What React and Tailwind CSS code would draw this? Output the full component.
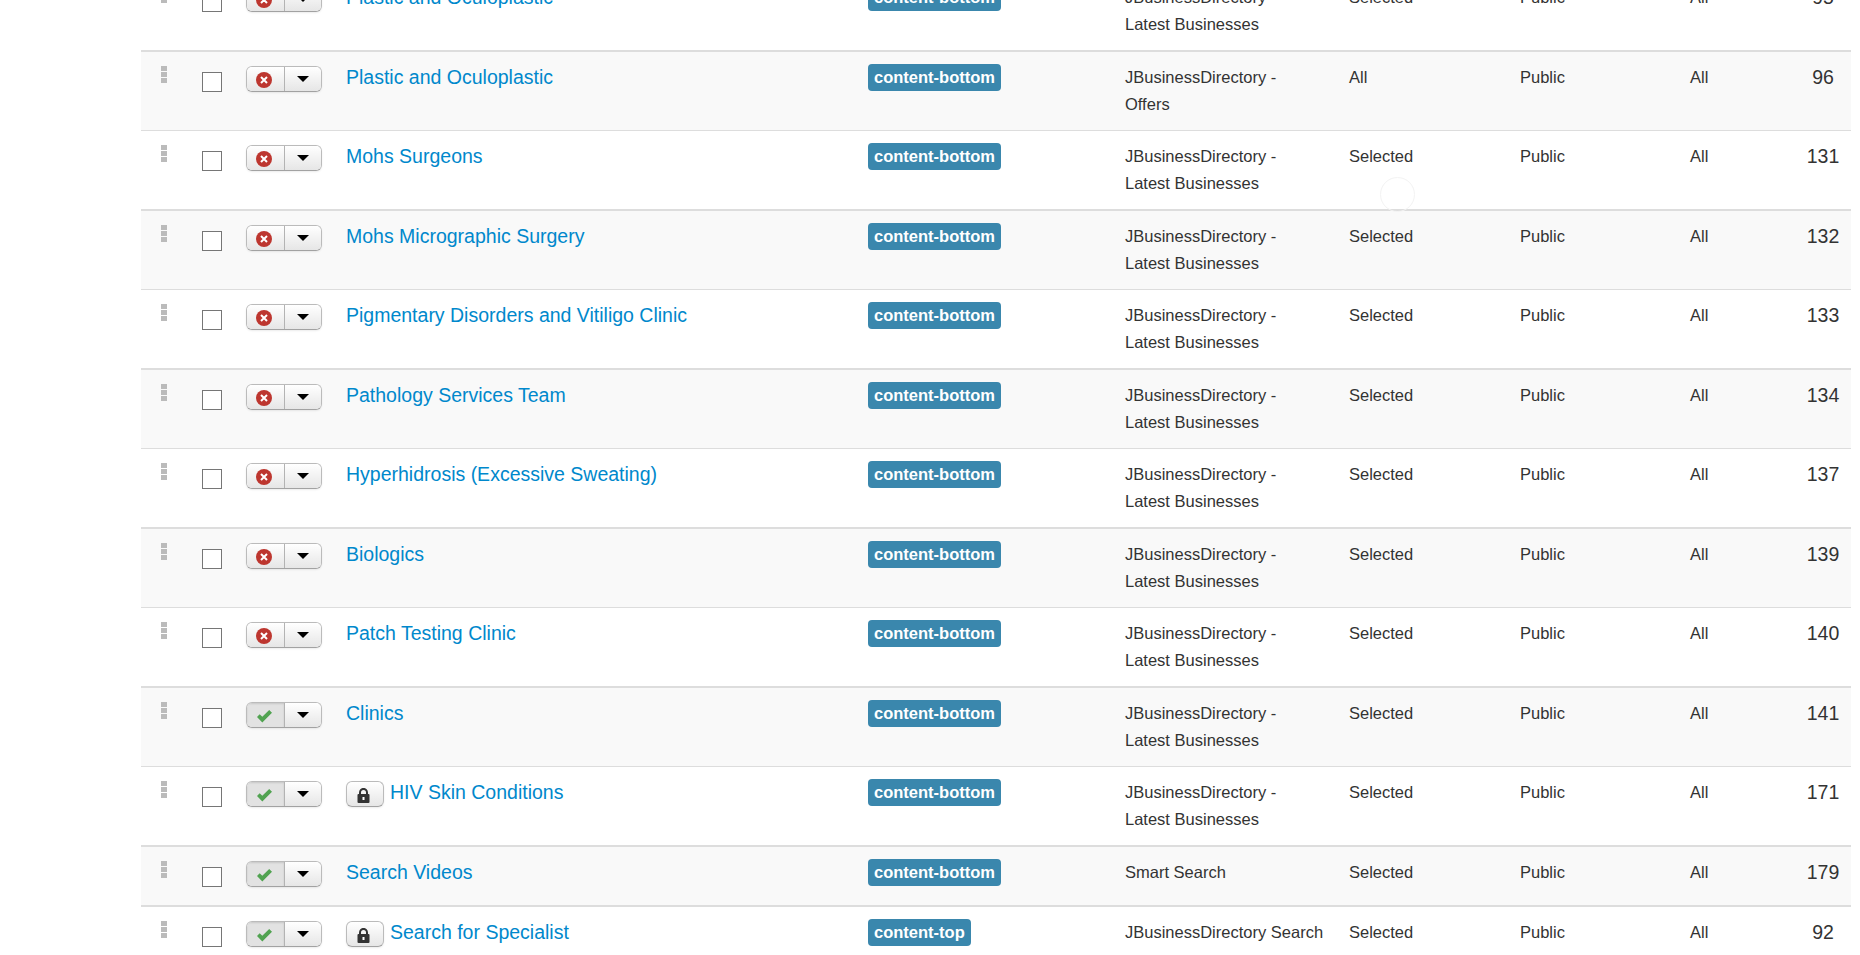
import React from "react";

const rows = [
  { name: "Plastic and Oculoplastic", module: ["JBusinessDirectory -", "Latest Businesses"], pages: "Selected", id: "95", state: "off", h: "h-[79px]", line: "border-t" },
  { name: "Plastic and Oculoplastic", module: ["JBusinessDirectory -", "Offers"], pages: "All", id: "96", state: "off", h: "h-[80px]", line: "border-t-2", gray: true },
  { name: "Mohs Surgeons", module: ["JBusinessDirectory -", "Latest Businesses"], pages: "Selected", id: "131", state: "off", h: "h-[79px]", line: "border-t" },
  { name: "Mohs Micrographic Surgery", module: ["JBusinessDirectory -", "Latest Businesses"], pages: "Selected", id: "132", state: "off", h: "h-[80px]", line: "border-t-2", gray: true },
  { name: "Pigmentary Disorders and Vitiligo Clinic", module: ["JBusinessDirectory -", "Latest Businesses"], pages: "Selected", id: "133", state: "off", h: "h-[79px]", line: "border-t" },
  { name: "Pathology Services Team", module: ["JBusinessDirectory -", "Latest Businesses"], pages: "Selected", id: "134", state: "off", h: "h-[80px]", line: "border-t-2", gray: true },
  { name: "Hyperhidrosis (Excessive Sweating)", module: ["JBusinessDirectory -", "Latest Businesses"], pages: "Selected", id: "137", state: "off", h: "h-[79px]", line: "border-t" },
  { name: "Biologics", module: ["JBusinessDirectory -", "Latest Businesses"], pages: "Selected", id: "139", state: "off", h: "h-[80px]", line: "border-t-2", gray: true },
  { name: "Patch Testing Clinic", module: ["JBusinessDirectory -", "Latest Businesses"], pages: "Selected", id: "140", state: "off", h: "h-[79px]", line: "border-t" },
  { name: "Clinics", module: ["JBusinessDirectory -", "Latest Businesses"], pages: "Selected", id: "141", state: "on", h: "h-[80px]", line: "border-t-2", gray: true },
  { name: "HIV Skin Conditions", module: ["JBusinessDirectory -", "Latest Businesses"], pages: "Selected", id: "171", state: "on", locked: true, h: "h-[79px]", line: "border-t" },
  { name: "Search Videos", module: ["Smart Search"], pages: "Selected", id: "179", state: "on", h: "h-[60px]", line: "border-t-2", gray: true },
  { name: "Search for Specialist", module: ["JBusinessDirectory Search"], pages: "Selected", id: "92", state: "on", locked: true, badge: "content-top", h: "h-[60px]", line: "border-t-2" },
];

function Grip() {
  return (
    <div className="flex flex-col gap-px w-[6px] ml-[20px]">
      <span className="block h-[5px] bg-[#bbbbbb]" />
      <span className="block h-[5px] bg-[#bbbbbb]" />
      <span className="block h-[5px] bg-[#bbbbbb]" />
    </div>
  );
}

function StatusIcon({ state }) {
  if (state === "on") {
    return (
      <svg width="15" height="13" viewBox="0 0 15 13">
        <path d="M0 7l2.7-2.7 2.6 2.5L12.2 0 15 2.8 5.3 12.6z" fill="#51a351" />
      </svg>
    );
  }
  return (
    <svg width="16" height="16" viewBox="0 0 16 16">
      <circle cx="8" cy="8" r="8" fill="#bd362f" />
      <path d="M5 5l6 6M11 5l-6 6" stroke="#fff" strokeWidth="2" />
    </svg>
  );
}

function StatusButtons({ state }) {
  const left = state === "on" ? "bg-[#e2e2e2] shadow-[inset_0_1px_2px_rgba(0,0,0,0.12)]" : "bg-gradient-to-b from-white to-[#e6e6e6]";
  return (
    <div className="flex w-[76px] h-[26px] rounded-[6px] border border-[#bbbbbb] border-b-[#a2a2a2] overflow-hidden shadow-[0_1px_2px_rgba(0,0,0,0.08)]">
      <div className={`flex items-center justify-center w-[38px] pr-[3px] pt-[2px] border-r border-[#b3b3b3] ${left}`}>
        <StatusIcon state={state} />
      </div>
      <div className="flex flex-1 items-center justify-center bg-gradient-to-b from-white to-[#e6e6e6]">
        <span className="block w-0 h-0 border-x-[6px] border-x-transparent border-t-[6px] border-t-black" />
      </div>
    </div>
  );
}

function LockButton() {
  return (
    <span className="inline-flex align-top items-center justify-center w-[38px] h-[26px] mt-[2px] mr-[6px] pr-[3px] pt-[2px] rounded-[6px] border border-[#bbbbbb] border-b-[#a2a2a2] bg-gradient-to-b from-white to-[#e6e6e6] shadow-[0_1px_2px_rgba(0,0,0,0.08)]">
      <svg width="13" height="15" viewBox="0 0 13 15">
        <path d="M3 7V4.4a3.5 3.5 0 0 1 7 0V7" fill="none" stroke="#333" strokeWidth="2" />
        <rect x="0.5" y="6" width="12" height="9" rx="1" fill="#333" />
        <rect x="5.5" y="9" width="2" height="3" fill="#fff" />
      </svg>
    </span>
  );
}

export default function App() {
  return (
    <div className="relative h-[955px] overflow-hidden bg-white font-['Liberation_Sans',Arial,sans-serif] text-[16.5px] leading-[27px] text-[#333333]">
      <div className="pl-[141px] pr-[9px] -mt-[29px]">
        <table className="w-[1710px] table-fixed border-separate border-spacing-0">
          <colgroup>
            <col className="w-[61px]" />
            <col className="w-[44px]" />
            <col className="w-[100px]" />
            <col className="w-[522px]" />
            <col className="w-[257px]" />
            <col className="w-[224px]" />
            <col className="w-[171px]" />
            <col className="w-[170px]" />
            <col className="w-[105px]" />
            <col />
          </colgroup>
          <tbody>
            {rows.map((row, i) => (
              <tr key={i} className={`${row.h} ${row.gray ? "bg-[#f9f9f9]" : "bg-white"}`}>
                <td className={`align-top pt-[14px] ${row.line} border-[#dddddd]`}><Grip /></td>
                <td className={`align-top pt-[14px] ${row.line} border-[#dddddd]`}>
                  <div className="mt-[6px] w-[20px] h-[20px] border border-[#767676] bg-white" />
                </td>
                <td className={`align-top pt-[14px] ${row.line} border-[#dddddd]`}><StatusButtons state={row.state} /></td>
                <td className={`align-top pt-[12px] ${row.line} border-[#dddddd] text-[19.5px] text-[#0088cc]`}>
                  {row.locked ? <LockButton /> : null}
                  <a className="align-top" href="#">{row.name}</a>
                </td>
                <td className={`align-top pt-[12px] ${row.line} border-[#dddddd]`}>
                  <span className="inline-block align-top h-[27px] px-[6px] rounded-[4px] bg-[#3a87ad] text-[16.5px] font-bold text-white">{row.badge || "content-bottom"}</span>
                </td>
                <td className={`align-top pt-[12px] ${row.line} border-[#dddddd]`}>
                  {row.module.map((t) => <div key={t}>{t}</div>)}
                </td>
                <td className={`align-top pt-[12px] ${row.line} border-[#dddddd]`}>{row.pages}</td>
                <td className={`align-top pt-[12px] ${row.line} border-[#dddddd]`}>Public</td>
                <td className={`align-top pt-[12px] ${row.line} border-[#dddddd]`}>All</td>
                <td className={`align-top pt-[12px] ${row.line} border-[#dddddd] text-center text-[19.5px]`}>{row.id}</td>
              </tr>
            ))}
          </tbody>
        </table>
      </div>
      <div className="absolute left-[1380px] top-[177px] w-[35px] h-[35px] rounded-full border border-[#f3f3f3]" />
    </div>
  );
}
